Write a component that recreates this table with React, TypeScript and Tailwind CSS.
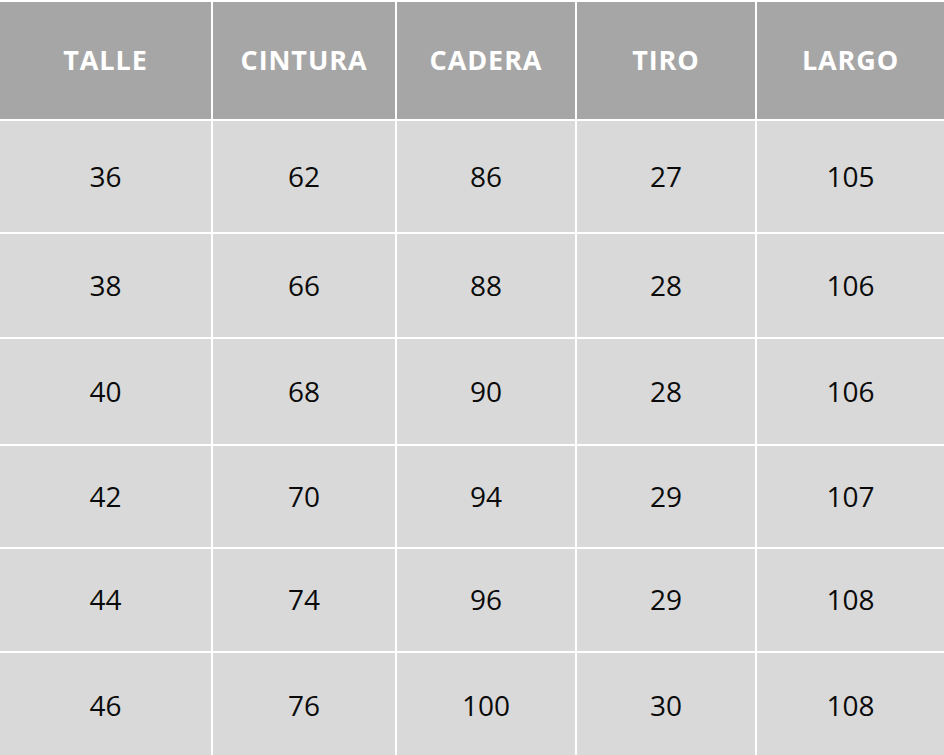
import React from 'react';

const headers = ['TALLE', 'CINTURA', 'CADERA', 'TIRO', 'LARGO'];

const rows = [
  { h: 'h-[111px]', cells: ['36', '62', '86', '27', '105'] },
  { h: 'h-[103px]', cells: ['38', '66', '88', '28', '106'] },
  { h: 'h-[105px]', cells: ['40', '68', '90', '28', '106'] },
  { h: 'h-[101px]', cells: ['42', '70', '94', '29', '107'] },
  { h: 'h-[102px]', cells: ['44', '74', '96', '29', '108'] },
  { h: 'h-[106px]', cells: ['46', '76', '100', '30', '108'] },
];

const App: React.FC = () => {
  return (
    <div className="w-[944px] h-[755px] overflow-hidden bg-white pt-[2px] font-['Open_Sans',sans-serif]">
      <div className="grid grid-cols-[211px_182px_178px_178px_187px] gap-[2px]">
        {/* Header */}
        {headers.map((h) => (
          <div
            key={h}
            className="h-[117px] bg-[#a6a6a6] flex items-center justify-center text-white font-bold text-[27px] tracking-[0.9px]"
          >
            {h}
          </div>
        ))}

        {/* Body */}
        {rows.map((r, i) =>
          r.cells.map((c, j) => (
            <div
              key={`${i}-${j}`}
              className={`${r.h} bg-[#d9d9d9] flex items-center justify-center pb-[2px] text-[#0a0a0a] text-[28px]`}
            >
              {c}
            </div>
          ))
        )}
      </div>
    </div>
  );
};

export default App;
